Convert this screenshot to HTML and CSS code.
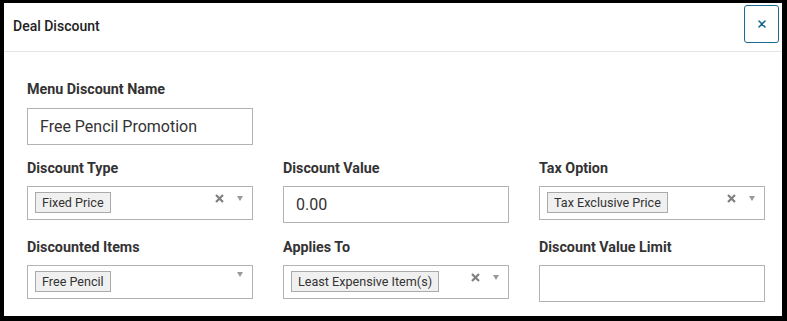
FILE: index.html
```html
<!DOCTYPE html>
<html lang="en">
<head>
    <meta charset="UTF-8">
    <meta name="viewport" content="width=device-width, initial-scale=1.0">
    <title>Deal Discount</title>
    <link rel="stylesheet" href="styles.css">
</head>
<body>
    <div class="modal">
        <div class="modal-header">
            <h1>Deal Discount</h1>
            <button type="button" class="close-btn" aria-label="Close">
                <svg width="8" height="8" viewBox="0 0 8 8">
                    <path d="M1 1 L7 7 M7 1 L1 7" stroke="#1c6a90" stroke-width="1.6" stroke-linecap="round"/>
                </svg>
            </button>
        </div>
        <div class="modal-body">
            <div class="form-group single">
                <label for="discountName">Menu Discount Name</label>
                <div class="text-box">Free Pencil Promotion</div>
            </div>
            <div class="form-grid">
                <div class="form-group">
                    <label>Discount Type</label>
                    <div class="select-box">
                        <span class="tag">Fixed Price</span>
                        <span class="controls">
                            <svg class="clear" width="9" height="9" viewBox="0 0 9 9">
                                <path d="M1 1 L8 8 M8 1 L1 8" stroke="#808080" stroke-width="2.2"/>
                            </svg>
                            <span class="arrow"></span>
                        </span>
                    </div>
                </div>
                <div class="form-group">
                    <label>Discount Value</label>
                    <div class="text-box">0.00</div>
                </div>
                <div class="form-group">
                    <label>Tax Option</label>
                    <div class="select-box">
                        <span class="tag">Tax Exclusive Price</span>
                        <span class="controls">
                            <svg class="clear" width="9" height="9" viewBox="0 0 9 9">
                                <path d="M1 1 L8 8 M8 1 L1 8" stroke="#808080" stroke-width="2.2"/>
                            </svg>
                            <span class="arrow"></span>
                        </span>
                    </div>
                </div>
                <div class="form-group">
                    <label>Discounted Items</label>
                    <div class="select-box">
                        <span class="tag">Free Pencil</span>
                        <span class="controls">
                            <span class="arrow"></span>
                        </span>
                    </div>
                </div>
                <div class="form-group">
                    <label>Applies To</label>
                    <div class="select-box">
                        <span class="tag">Least Expensive Item(s)</span>
                        <span class="controls">
                            <svg class="clear" width="9" height="9" viewBox="0 0 9 9">
                                <path d="M1 1 L8 8 M8 1 L1 8" stroke="#808080" stroke-width="2.2"/>
                            </svg>
                            <span class="arrow"></span>
                        </span>
                    </div>
                </div>
                <div class="form-group">
                    <label>Discount Value Limit</label>
                    <div class="text-box"></div>
                </div>
            </div>
        </div>
    </div>
</body>
</html>
```

FILE: styles.css
```css
html, body {
    height: 100%;
}
body {
    font-family: Roboto, 'Liberation Sans', sans-serif;
    background-color: #000;
    margin: 0;
    padding: 3px 5px 5px 4px;
    box-sizing: border-box;
}
.modal {
    background: white;
    height: 100%;
}
.modal-header {
    display: flex;
    justify-content: space-between;
    align-items: flex-start;
    height: 48px;
    padding: 0 3px 0 9px;
    border-bottom: 1px solid #e5e5e5;
}
.modal-header h1 {
    margin: 0;
    font-size: 14px;
    font-weight: 500;
    line-height: 46px;
    color: #222;
}
.close-btn {
    width: 35px;
    height: 38px;
    margin-top: 2px;
    padding: 0;
    background: white;
    border: 1px solid #1c6a90;
    border-radius: 3px;
    display: flex;
    align-items: center;
    justify-content: center;
}
.modal-body {
    padding: 28px 17px 0 23px;
}
.form-group.single {
    width: 226px;
    margin-bottom: 14px;
}
.form-group.single label {
    margin-bottom: 10px;
}
.form-grid {
    display: grid;
    grid-template-columns: repeat(3, 226px);
    column-gap: 30px;
    row-gap: 15px;
    align-items: start;
}
label {
    display: block;
    margin-bottom: 9px;
    font-size: 14.3px;
    line-height: 18px;
    font-weight: bold;
    color: #333;
}
.text-box {
    height: 37px;
    box-sizing: border-box;
    border: 1px solid #b3b3b3;
    padding: 0 12px;
    font-size: 16px;
    line-height: 35px;
    color: #333;
}
.select-box {
    position: relative;
    height: 34px;
    box-sizing: border-box;
    border: 1px solid #b3b3b3;
    padding: 5px 7px 0;
}
.tag {
    display: inline-block;
    height: 21px;
    box-sizing: border-box;
    padding: 0 6px;
    background-color: #f0f0f0;
    border: 1px solid #aaa;
    font-size: 12.6px;
    line-height: 19px;
    color: #333;
}
.controls {
    position: absolute;
    top: 7px;
    right: 9px;
    display: flex;
    align-items: center;
    gap: 13px;
}
.arrow {
    width: 0;
    height: 0;
    border-left: 3.5px solid transparent;
    border-right: 3.5px solid transparent;
    border-top: 5px solid #999;
    margin-top: -1px;
}
```
